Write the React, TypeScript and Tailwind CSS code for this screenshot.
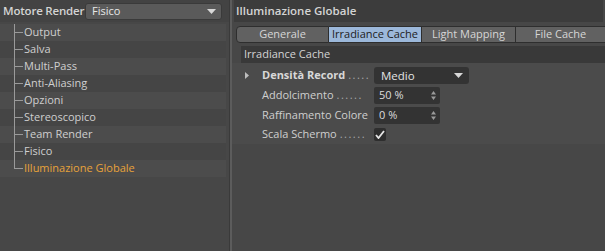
const font = { fontFamily: '"Open Sans", "Liberation Sans", sans-serif' };

const treeItems = [
  'Output',
  'Salva',
  'Multi-Pass',
  'Anti-Aliasing',
  'Opzioni',
  'Stereoscopico',
  'Team Render',
  'Fisico',
  'Illuminazione Globale',
];

function Arrow() {
  return (
    <svg width="9" height="5" viewBox="0 0 9 5" className="shrink-0">
      <path d="M0 0 H9 L4.5 5 Z" fill="#d8d8d8" />
    </svg>
  );
}

function Spinner() {
  return (
    <svg width="5" height="9" viewBox="0 0 5 9" className="shrink-0">
      <path d="M0 3.5 L2.5 0 L5 3.5 Z M0 5.5 H5 L2.5 9 Z" fill="#9a9a9a" />
    </svg>
  );
}

function Dots({ n }: { n: number }) {
  return <span className="text-[#a8a8a8] tracking-[1.5px] ml-[3px] font-normal">{'.'.repeat(n)}</span>;
}

export default function App() {
  return (
    <div
      className="w-[605px] h-[251px] flex bg-[#474747] text-[11px] text-[#cfcfcf] overflow-hidden"
      style={font}
    >
      {/* Left panel */}
      <div className="w-[229px] shrink-0 flex flex-col">
        <div className="h-[22px] flex items-center pl-[3px] pr-[7px] bg-[#434343]">
          <span className="font-semibold text-[#d4d4d4] text-[11.5px] w-[82px] whitespace-nowrap tracking-[-0.2px]">
            Motore Render
          </span>
          <div className="flex-1 h-[17px] rounded-[3px] bg-[#5a5a5a] border border-[#3a3a3a] flex items-center justify-between pl-[6px] pr-[5px]">
            <span className="text-[#e8e8e8]">Fisico</span>
            <Arrow />
          </div>
        </div>
        <div className="mt-[2px] w-[226px]">
          {treeItems.map((item, i) => {
            const last = i === treeItems.length - 1;
            return (
              <div
                key={item}
                className={`h-[17px] flex items-center relative ${i % 2 === 0 ? 'bg-[#4c4c4c]' : 'bg-[#454545]'}`}
              >
                <div
                  className={`absolute left-[14px] top-0 w-px bg-[#9a9a9a] ${last ? 'h-[9px]' : 'h-[17px]'}`}
                />
                <div className="absolute left-[14px] top-[8px] w-[9px] h-px bg-[#9a9a9a]" />
                <span className={`pl-[24px] ${last ? 'text-[#e8a33a]' : 'text-[#cfcfcf]'}`}>{item}</span>
              </div>
            );
          })}
        </div>
      </div>

      {/* Divider */}
      <div className="w-px bg-[#3a3a3a] shrink-0" />
      <div className="w-[2px] bg-[#5c5c5c] shrink-0" />

      {/* Right panel */}
      <div className="flex-1 flex flex-col">
        <div className="h-[22px] mx-[2px] bg-[#3c3c3c] flex items-center pl-[2px]">
          <span className="font-semibold text-[#d4d4d4] text-[11.5px]">Illuminazione Globale</span>
        </div>
        <div className="h-[4px]" />
        <div className="h-[17px] flex pl-[4px] text-[#d6d6d6]">
          <div className="w-[93px] rounded-l-[4px] bg-[#616161] border border-[#2e2e2e] flex items-center justify-center">
            Generale
          </div>
          <div className="w-[92px] bg-[#9cb8da] border-y border-[#2e2e2e] text-[#1c1c1c] flex items-center justify-center">
            Irradiance Cache
          </div>
          <div className="w-[95px] bg-[#616161] border border-[#2e2e2e] flex items-center justify-center">
            Light Mapping
          </div>
          <div className="flex-1 bg-[#616161] border-y border-[#2e2e2e] flex items-center justify-center">
            File Cache
          </div>
        </div>
        <div className="h-[3px]" />
        <div className="h-[17px] ml-[9px] bg-[#393939] flex items-center pl-[3px]">
          <span className="text-[#d4d4d4]">Irradiance Cache</span>
        </div>
        <div className="h-[81px] bg-[#4b4b4b] pl-[13px] pt-[4px] flex flex-col gap-[3px]">
          <div className="h-[17px] flex items-center">
            <svg width="4" height="7" viewBox="0 0 4 7" className="mr-[13px]">
              <path d="M0 0 L4 3.5 L0 7 Z" fill="#bdbdbd" />
            </svg>
            <span className="w-[112px] font-bold text-[#d8d8d8] whitespace-nowrap">
              Densità Record<Dots n={5} />
            </span>
            <div className="w-[95px] h-[17px] rounded-[3px] bg-[#333333] flex items-center justify-between pl-[7px] pr-[6px]">
              <span className="text-[#e4e4e4] text-[11.5px]">Medio</span>
              <Arrow />
            </div>
          </div>
          <div className="h-[17px] flex items-center pl-[17px]">
            <span className="w-[112px] whitespace-nowrap">
              Addolcimento<Dots n={6} />
            </span>
            <div className="w-[66px] h-[17px] rounded-[2px] bg-[#333333] flex items-center justify-between pl-[5px] pr-[4px]">
              <span className="text-[#dcdcdc]">50 %</span>
              <Spinner />
            </div>
          </div>
          <div className="h-[17px] flex items-center pl-[17px]">
            <span className="w-[112px] whitespace-nowrap">Raffinamento Colore</span>
            <div className="w-[66px] h-[17px] rounded-[2px] bg-[#333333] flex items-center justify-between pl-[5px] pr-[4px]">
              <span className="text-[#dcdcdc]">0 %</span>
              <Spinner />
            </div>
          </div>
          <div className="h-[14px] flex items-center pl-[17px]">
            <span className="w-[112px] whitespace-nowrap">
              Scala Schermo<Dots n={6} />
            </span>
            <div className="w-[12px] h-[13px] rounded-[2px] bg-[#2e2e2e] flex items-center justify-center">
              <svg width="10" height="9" viewBox="0 0 10 9">
                <path d="M1 5 L3.5 8 L9 1" stroke="#e6e6e6" strokeWidth="1.8" fill="none" />
              </svg>
            </div>
          </div>
        </div>
      </div>
    </div>
  );
}
